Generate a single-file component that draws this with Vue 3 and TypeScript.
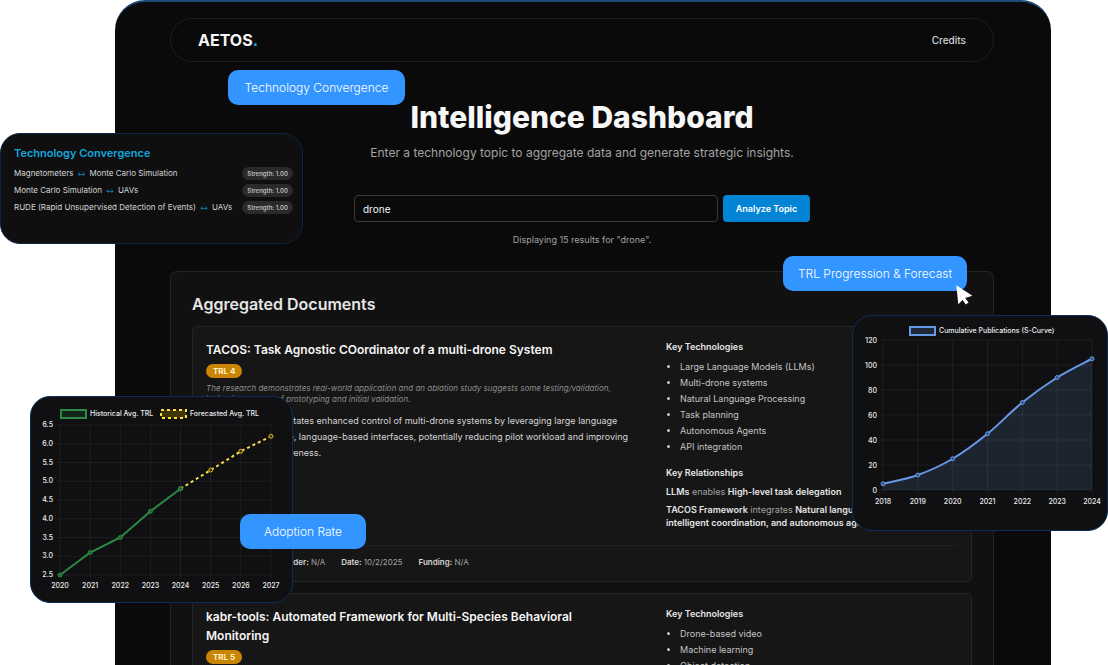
<script setup lang="ts">
import { ref } from 'vue'

interface Point { x: number; y: number }
interface Relation { subject: string; verb: string; object: string[] }
interface Doc {
  title: string
  trl: number
  rationale: string[]
  summary: string[]
  technologies: string[]
  relations: Relation[]
  meta: { label: string; value: string }[]
}

const topic = ref('drone')

const docs: Doc[] = [
  {
    title: 'TACOS: Task Agnostic COordinator of a multi-drone System',
    trl: 4,
    rationale: [
      'The research demonstrates real-world application and an ablation study suggests some testing/validation,',
      'indicating a stage of prototyping and initial validation.',
    ],
    summary: [
      'The framework facilitates enhanced control of multi-drone systems by leveraging large language',
      'models, and intuitive, language-based interfaces, potentially reducing pilot workload and improving',
      'coordination effectiveness.',
    ],
    technologies: [
      'Large Language Models (LLMs)',
      'Multi-drone systems',
      'Natural Language Processing',
      'Task planning',
      'Autonomous Agents',
      'API integration',
    ],
    relations: [
      { subject: 'LLMs', verb: 'enables', object: ['High-level task delegation'] },
      {
        subject: 'TACOS Framework',
        verb: 'integrates',
        object: ['Natural language control,', 'intelligent coordination, and autonomous agents'],
      },
    ],
    meta: [
      { label: 'Source:', value: 'arXiv' },
      { label: 'Provider:', value: 'N/A' },
      { label: 'Date:', value: '10/2/2025' },
      { label: 'Funding:', value: 'N/A' },
    ],
  },
  {
    title: 'kabr-tools: Automated Framework for Multi-Species Behavioral Monitoring',
    trl: 5,
    rationale: [],
    summary: [],
    technologies: ['Drone-based video', 'Machine learning', 'Object detection'],
    relations: [],
    meta: [],
  },
]

const links = [
  { from: 'Magnetometers', to: 'Monte Carlo Simulation' },
  { from: 'Monte Carlo Simulation', to: 'UAVs' },
  { from: 'RUDE (Rapid Unsupervised Detection of Events)', to: 'UAVs' },
]

const project = (values: number[], first: number, left: number, step: number, bottom: number, unit: number, base: number): Point[] =>
  values.map((v, i) => ({ x: left + (first + i) * step, y: bottom - (v - base) * unit }))

const toLine = (pts: Point[]) => pts.map((p) => `${p.x},${p.y}`).join(' ')

/* Adoption chart */
const trlYears = [2020, 2021, 2022, 2023, 2024, 2025, 2026, 2027]
const trlTicks = [6.5, 6, 5.5, 5, 4.5, 4, 3.5, 3, 2.5]
const trlX = (i: number) => 29 + i * (211 / 7)
const trlY = (v: number) => 178 - (v - 2.5) * 37.5
const historical = project([2.5, 3.1, 3.5, 4.2, 4.8], 0, 29, 211 / 7, 178, 37.5, 2.5)
const forecast = project([4.8, 5.3, 5.8, 6.2], 4, 29, 211 / 7, 178, 37.5, 2.5)

/* Publications chart */
const pubYears = [2018, 2019, 2020, 2021, 2022, 2023, 2024]
const pubTicks = [120, 100, 80, 60, 40, 20, 0]
const pubX = (i: number) => 30 + i * (209 / 6)
const pubY = (v: number) => 174 - v * 1.25
const publications = project([5, 12, 25, 45, 70, 90, 105], 0, 30, 209 / 6, 174, 1.25, 0)

function smooth(pts: Point[], tension: number): string {
  const n = pts.length
  const slope = pts.map((_, i) => {
    const a = pts[Math.max(0, i - 1)]
    const b = pts[Math.min(n - 1, i + 1)]
    return { x: ((b.x - a.x) * tension) / 2, y: ((b.y - a.y) * tension) / 2 }
  })
  let d = `M${pts[0].x} ${pts[0].y}`
  for (let i = 1; i < n; i++) {
    const p = pts[i - 1]
    const q = pts[i]
    d += ` C${p.x + slope[i - 1].x} ${p.y + slope[i - 1].y} ${q.x - slope[i].x} ${q.y - slope[i].y} ${q.x} ${q.y}`
  }
  return d
}
const curve = smooth(publications, 0.36)
const area = `${curve} L239 174 L30 174 Z`
</script>

<template>
  <div class="stage">
    <main class="panel">
      <header class="nav">
        <div class="logo">AETOS<span>.</span></div>
        <a href="#credits">Credits</a>
      </header>

      <h1>Intelligence Dashboard</h1>
      <p class="lede">Enter a technology topic to aggregate data and generate strategic insights.</p>

      <form class="search" @submit.prevent>
        <input v-model="topic" type="text" aria-label="Technology topic" />
        <button type="submit">Analyze Topic</button>
      </form>
      <p class="status">Displaying 15 results for "drone".</p>

      <section class="documents">
        <h2>Aggregated Documents</h2>
        <article v-for="doc in docs" :key="doc.title" class="doc">
          <div class="columns">
            <div>
              <h3>{{ doc.title }}</h3>
              <span class="badge">TRL {{ doc.trl }}</span>
              <p class="rationale"><span v-for="line in doc.rationale" :key="line">{{ line }}</span></p>
              <p class="summary"><span v-for="line in doc.summary" :key="line">{{ line }}</span></p>
            </div>
            <div>
              <h4>Key Technologies</h4>
              <ul>
                <li v-for="t in doc.technologies" :key="t">{{ t }}</li>
              </ul>
              <template v-if="doc.relations.length">
                <h4 class="second">Key Relationships</h4>
                <p v-for="r in doc.relations" :key="r.subject" class="relation">
                  <b>{{ r.subject }}</b> {{ r.verb }}
                  <template v-for="(o, i) in r.object" :key="o"><br v-if="i" /><b>{{ o }}</b></template>
                </p>
              </template>
            </div>
          </div>
          <footer v-if="doc.meta.length">
            <span v-for="m in doc.meta" :key="m.label"><b>{{ m.label }}</b> {{ m.value }}</span>
          </footer>
        </article>
      </section>
    </main>

    <section class="card convergence">
      <h2>Technology Convergence</h2>
      <ul>
        <li v-for="l in links" :key="l.from">
          <span>{{ l.from }}<i>↔</i>{{ l.to }}</span>
          <em>Strength: 1.00</em>
        </li>
      </ul>
    </section>

    <figure class="card adoption">
      <svg viewBox="0 0 261 205" role="img" aria-label="Adoption rate chart">
        <g class="grid">
          <line v-for="(y, i) in trlYears" :key="y" :x1="trlX(i)" :x2="trlX(i)" y1="28" y2="181" />
          <line v-for="t in trlTicks" :key="t" x1="26" x2="240" :y1="trlY(t)" :y2="trlY(t)" />
        </g>
        <rect class="key-green" x="30" y="13" width="25" height="8" />
        <text x="59" y="19">Historical Avg. TRL</text>
        <rect class="key-yellow" x="130" y="13" width="25" height="8" />
        <text x="159" y="19">Forecasted Avg. TRL</text>
        <text v-for="t in trlTicks" :key="t" class="end" x="22" :y="trlY(t) + 2">{{ t.toFixed(1) }}</text>
        <text v-for="(y, i) in trlYears" :key="y" class="mid" :x="trlX(i)" y="191">{{ y }}</text>
        <polyline class="yellow" :points="toLine(forecast)" />
        <circle v-for="p in forecast" :key="p.x" class="dot-yellow" :cx="p.x" :cy="p.y" r="2" />
        <polyline class="green" :points="toLine(historical)" />
        <circle v-for="p in historical" :key="p.x" class="dot-green" :cx="p.x" :cy="p.y" r="2" />
      </svg>
    </figure>

    <figure class="card publications">
      <svg viewBox="0 0 254 214" role="img" aria-label="Cumulative publications chart">
        <path class="area" :d="area" />
        <g class="grid">
          <line v-for="(y, i) in pubYears" :key="y" :x1="pubX(i)" :x2="pubX(i)" y1="24" y2="177" />
          <line v-for="t in pubTicks" :key="t" x1="27" x2="239" :y1="pubY(t)" :y2="pubY(t)" />
        </g>
        <rect class="key-blue" x="57" y="11" width="25" height="8" />
        <text x="86" y="17">Cumulative Publications (S-Curve)</text>
        <text v-for="t in pubTicks" :key="t" class="end" x="24" :y="pubY(t) + 3">{{ t }}</text>
        <text v-for="(y, i) in pubYears" :key="y" class="mid" :x="pubX(i)" y="188">{{ y }}</text>
        <path class="blue" :d="curve" />
        <circle v-for="p in publications" :key="p.x" class="dot-blue" :cx="p.x" :cy="p.y" r="2" />
      </svg>
    </figure>

    <button type="button" class="pill pill-convergence">Technology Convergence</button>
    <button type="button" class="pill pill-forecast">TRL Progression &amp; Forecast</button>
    <button type="button" class="pill pill-adoption">Adoption Rate</button>

    <svg class="cursor" viewBox="0 0 17 20" aria-hidden="true">
      <path d="M0.3 0.3 L16.4 10.8 L9.2 13 L12.6 17.6 L9.8 19.6 L6.6 15 L2.3 19.2 Z" />
    </svg>
  </div>
</template>

<style>
body {
  margin: 0;
  background: #fff;
}
</style>

<style scoped>
.stage {
  position: relative;
  height: 100vh;
  overflow: hidden;
  font-family: Inter, "Liberation Sans", sans-serif;
  color: #d4d4d4;
}
.stage * {
  box-sizing: border-box;
}
h1, h2, h3, h4, p, ul, figure {
  margin: 0;
  padding: 0;
}
button, input {
  font-family: inherit;
}
.panel {
  margin: 0 57px 0 115px;
  padding: 16px 57px 0 55px;
  min-height: 100vh;
  background: #0a0a0a;
  border-top: 2px solid #1d4a78;
  border-radius: 30px 30px 0 0;
}
.nav {
  display: flex;
  align-items: center;
  justify-content: space-between;
  height: 44px;
  padding: 0 27px;
  border: 1px solid #1f1f1f;
  border-radius: 22px;
}
.logo {
  font-size: 16px;
  line-height: 20px;
  font-weight: 700;
  color: #f5f5f5;
}
.logo span {
  color: #0ea5e9;
}
.nav a {
  font-size: 10px;
  line-height: 12px;
  font-weight: 500;
  color: #d4d4d4;
  text-decoration: none;
}
h1 {
  margin-top: 37px;
  font-size: 30px;
  line-height: 36px;
  font-weight: 800;
  text-align: center;
  color: #f7f7f7;
}
.lede {
  margin-top: 9px;
  font-size: 12px;
  line-height: 18px;
  text-align: center;
  color: #a3a3a3;
}
.search {
  display: flex;
  gap: 5px;
  max-width: 456px;
  margin: 33px auto 0;
}
.search input {
  flex: 1;
  min-width: 0;
  height: 27px;
  padding: 0 8px;
  font-size: 10px;
  color: #f5f5f5;
  background: #0a0a0a;
  border: 1px solid #3a3a3a;
  border-radius: 4px;
  outline: none;
}
.search button {
  width: 87px;
  height: 27px;
  padding: 0;
  font-size: 9px;
  font-weight: 600;
  color: #fff;
  background: #0284d5;
  border: 0;
  border-radius: 4px;
}
.status {
  margin-top: 11px;
  font-size: 9px;
  line-height: 14px;
  text-align: center;
  color: #a3a3a3;
}
.documents {
  margin-top: 24px;
  padding: 22px 21px 0;
  background: #111;
  border: 1px solid #242424;
  border-bottom: 0;
  border-radius: 7px 7px 0 0;
}
.documents h2 {
  font-size: 16px;
  line-height: 21px;
  font-weight: 600;
  color: #e5e5e5;
}
.doc {
  margin-top: 11px;
  padding: 13px;
  background: #161616;
  border: 1px solid #242424;
  border-radius: 5px;
}
.columns {
  display: grid;
  grid-template-columns: minmax(0, 1fr) 292px;
  gap: 14px;
}
h3 {
  max-width: 400px;
  font-size: 12px;
  line-height: 19px;
  font-weight: 600;
  color: #f5f5f5;
}
.badge {
  display: block;
  width: fit-content;
  margin-top: 5px;
  padding: 0 7px;
  font-size: 8px;
  line-height: 14px;
  font-weight: 700;
  color: #fef3c7;
  background: #ca8504;
  border-radius: 7px;
}
.rationale {
  margin-top: 5px;
  font-size: 8px;
  line-height: 11px;
  font-style: italic;
  color: #8c8c8c;
}
.summary {
  margin-top: 8px;
  font-size: 9px;
  line-height: 16px;
  color: #d4d4d4;
}
.rationale span, .summary span {
  display: block;
  white-space: nowrap;
}
h4 {
  font-size: 9px;
  line-height: 14px;
  font-weight: 600;
  color: #e5e5e5;
}
h4.second {
  margin-top: 11px;
}
.doc ul {
  margin-top: 5px;
  padding-left: 14px;
  font-size: 9px;
  line-height: 16px;
  color: #c4c4c4;
}
.relation {
  margin-top: 5px;
  font-size: 9px;
  line-height: 13px;
  color: #a3a3a3;
}
.relation b {
  font-weight: 600;
  color: #e5e5e5;
}
.doc footer {
  display: flex;
  gap: 16px;
  margin-top: 16px;
  padding: 10px 0 0;
  border-top: 1px solid #202020;
  font-size: 8px;
  line-height: 12px;
  color: #a3a3a3;
}
.doc footer b {
  font-weight: 600;
  color: #d4d4d4;
}
.card {
  position: absolute;
  background: #101012;
  border: 1px solid #0b2f5c;
  border-radius: 20px;
  overflow: hidden;
}
.card svg {
  display: block;
  width: 100%;
}
.convergence {
  top: 133px;
  left: 0;
  width: 303px;
  height: 111px;
  padding: 11px 9px 0 13px;
  background: #0f0f0f;
  border-color: #0b2547;
}
.convergence h2 {
  font-size: 11px;
  line-height: 16px;
  font-weight: 600;
  color: #12a5dc;
}
.convergence ul {
  display: grid;
  gap: 4px;
  margin-top: 6px;
  list-style: none;
}
.convergence li {
  display: flex;
  align-items: center;
  justify-content: space-between;
  font-size: 8px;
  line-height: 13px;
  color: #d4d4d4;
}
.convergence i {
  margin: 0 4px;
  font-size: 6px;
  font-style: normal;
  color: #0ea5e9;
}
.convergence em {
  padding: 0 5px;
  font-size: 6px;
  font-style: normal;
  font-weight: 600;
  color: #bdbdbd;
  background: #2a2a2a;
  border-radius: 7px;
}
.adoption {
  top: 396px;
  left: 30px;
  width: 263px;
}
.publications {
  top: 315px;
  right: 0;
  width: 256px;
}
text {
  font-size: 7px;
  font-weight: 500;
  fill: #ececec;
}
.end {
  text-anchor: end;
}
.mid {
  text-anchor: middle;
}
.grid line {
  stroke: #fff;
  stroke-opacity: 0.06;
}
.key-green, .green {
  fill: none;
  stroke: #2b8a45;
  stroke-width: 2;
}
.key-green {
  fill: #14251a;
}
.key-yellow, .yellow {
  fill: none;
  stroke: #fde047;
  stroke-width: 2;
  stroke-dasharray: 3 3;
}
.key-yellow {
  fill: #3f3606;
}
.key-blue, .blue {
  fill: none;
  stroke: #6699e6;
  stroke-width: 2;
}
.key-blue {
  fill: #1e2838;
}
.area {
  fill: #1c2430;
}
.dot-green {
  fill: #1f6b35;
  stroke: #2b8a45;
}
.dot-yellow {
  fill: #3f3606;
  stroke: #d9b021;
}
.dot-blue {
  fill: #35558a;
  stroke: #6699e6;
}
.pill {
  position: absolute;
  height: 35px;
  padding: 0;
  font-size: 12px;
  font-weight: 300;
  color: #fff;
  background: #3395ff;
  border: 0;
  border-radius: 10px;
}
.pill-convergence {
  top: 70px;
  left: 228px;
  width: 177px;
}
.pill-forecast {
  top: 256px;
  right: 141px;
  width: 184px;
}
.pill-adoption {
  top: 514px;
  left: 240px;
  width: 126px;
}
.cursor {
  position: absolute;
  top: 285px;
  right: 135px;
  width: 17px;
  height: 20px;
  fill: #fff;
}
</style>
